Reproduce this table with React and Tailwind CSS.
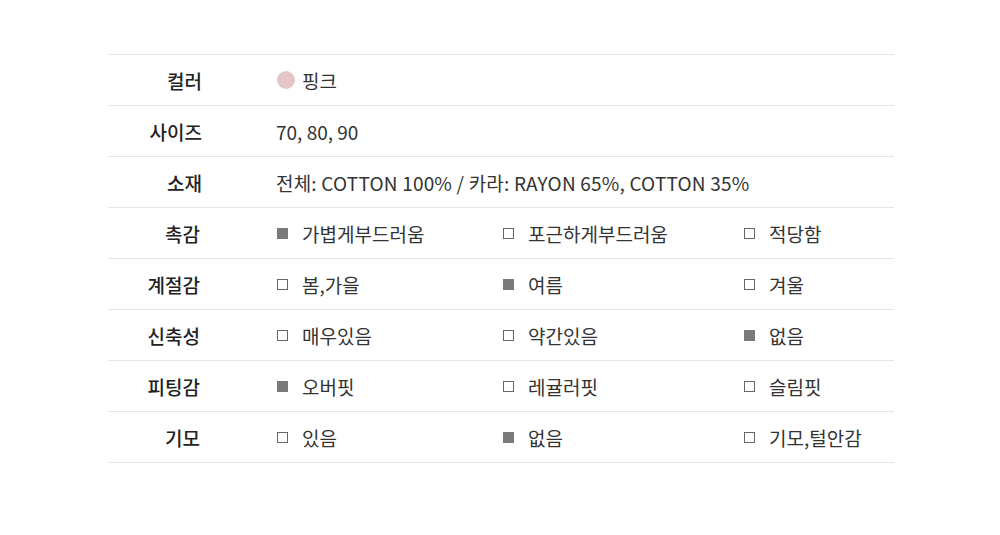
import React from "react";

const FONT = { fontFamily: '"Noto Sans CJK KR", "Noto Sans", sans-serif' };

function Box({ on }) {
  return on ? (
    <span className="inline-block w-[11px] h-[11px] bg-[#7a7a7a] shrink-0" />
  ) : (
    <span className="inline-block w-[11px] h-[11px] border border-[#666] bg-white shrink-0" />
  );
}

function Opt({ on, label, w }) {
  return (
    <div className={`flex items-center gap-[14px] ${w}`}>
      <Box on={on} />
      <span>{label}</span>
    </div>
  );
}

function Row({ label, children }) {
  return (
    <div className="flex items-center h-[51px] border-b border-[#e6e6e6]">
      <div className="w-[94px] text-right font-medium text-[#222]">{label}</div>
      <div className="ml-[77px] flex items-center text-[#333]">{children}</div>
    </div>
  );
}

function Opts({ items }) {
  const widths = ["w-[226px]", "w-[241px]", "w-[150px]"];
  return (
    <>
      {items.map(([on, label], i) => (
        <Opt key={i} on={on} label={label} w={widths[i]} />
      ))}
    </>
  );
}

export default function App() {
  return (
    <div className="w-[1000px] h-[535px] bg-white pt-[54px]" style={FONT}>
      <div className="ml-[108px] w-[786px] border-t border-[#e6e6e6] text-[19px] leading-none">
        <Row label="컬러">
          <span className="inline-block w-[18px] h-[18px] rounded-full bg-[#e4c6c6] mr-[7px] -ml-[2px]" />
          <span>핑크</span>
        </Row>
        <Row label="사이즈">
          <span className="-ml-[3px]">70, 80, 90</span>
        </Row>
        <Row label="소재">
          <span className="-ml-[3px] tracking-[0.2px]">전체: COTTON 100% / 카라: RAYON 65%, COTTON 35%</span>
        </Row>
        <Row label="촉감">
          <Opts items={[[true, "가볍게부드러움"], [false, "포근하게부드러움"], [false, "적당함"]]} />
        </Row>
        <Row label="계절감">
          <Opts items={[[false, "봄,가을"], [true, "여름"], [false, "겨울"]]} />
        </Row>
        <Row label="신축성">
          <Opts items={[[false, "매우있음"], [false, "약간있음"], [true, "없음"]]} />
        </Row>
        <Row label="피팅감">
          <Opts items={[[true, "오버핏"], [false, "레귤러핏"], [false, "슬림핏"]]} />
        </Row>
        <Row label="기모">
          <Opts items={[[false, "있음"], [true, "없음"], [false, "기모,털안감"]]} />
        </Row>
      </div>
    </div>
  );
}
